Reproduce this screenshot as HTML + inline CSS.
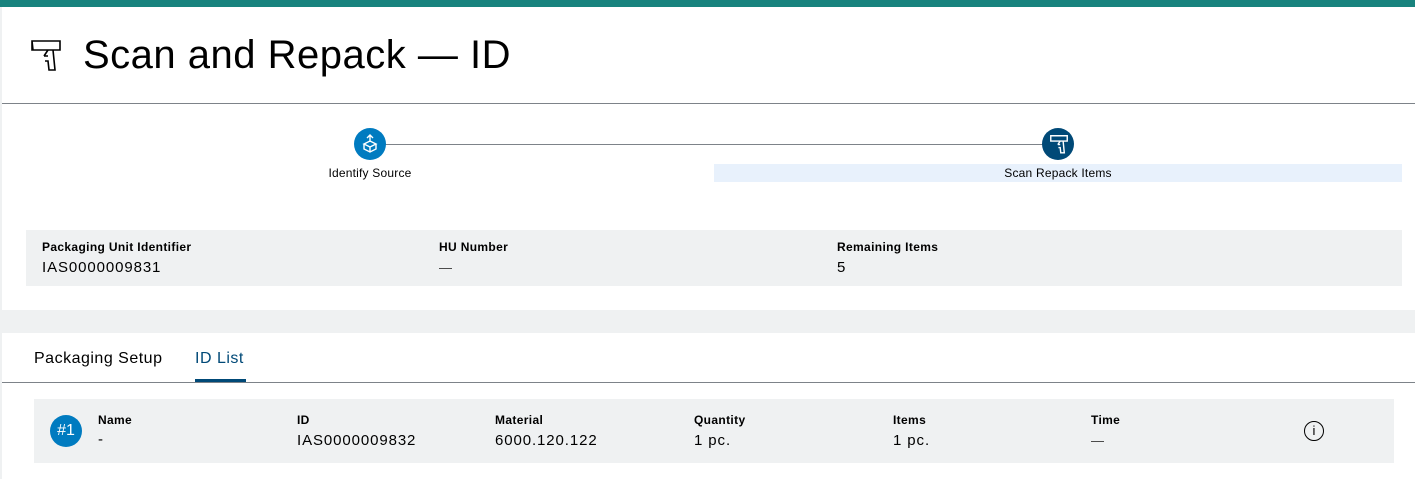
<!DOCTYPE html>
<html><head><meta charset="utf-8"><style>
*{margin:0;padding:0;box-sizing:border-box}
body{width:1415px;height:479px;background:#eff1f2;font-family:"Liberation Sans",sans-serif;color:#000;position:relative;overflow:hidden}
.abs{position:absolute}
.top{left:0;top:0;width:1415px;height:7px;background:#18837e}
.s1{left:2px;top:7px;width:1413px;height:303px;background:#fff}
.s2{left:2px;top:333px;width:1413px;height:146px;background:#fff}
.lbl{font-size:12px;font-weight:bold;letter-spacing:0.35px}
.val{font-size:15px;letter-spacing:0.9px}
.dash{font-size:13px;color:#333}
</style></head><body>
<div class="abs top"></div>
<div class="abs s1"></div>
<div class="abs s2"></div>
<svg class="abs" style="left:29px;top:38px" width="34" height="34" viewBox="0 0 34 34" fill="none" stroke="#000" stroke-width="1.6"><path d="M3 3h28v9H3z M3 3l1 9 M19 12l-4 6 M15 18h4 M19 12h5l2 20h-6l-1-9h-3"/></svg>
<div class="abs" style="left:83px;top:30px;font-size:40px;line-height:50px;letter-spacing:0.5px">Scan and Repack — ID</div>
<div class="abs" style="left:2px;top:103px;width:1413px;height:1px;background:#7d8389"></div>
<div class="abs" style="left:370px;top:144px;width:688px;height:1px;background:#7d8389"></div>
<div class="abs" style="left:714px;top:164px;width:688px;height:18px;background:#e8f1fc"></div>
<div class="abs" style="left:354px;top:128px;width:32px;height:32px;border-radius:50%;background:#007bc0"></div>
<svg class="abs" style="left:360px;top:134px" width="20" height="20" viewBox="0 0 20 20" fill="none" stroke="#fff" stroke-width="1.4"><path d="M10 1v7 M7 4l3-3 3 3 M4 10l6-3 6 3-6 3z M4 10v5l6 3 6-3v-5 M10 13v5"/></svg>
<div class="abs" style="left:1042px;top:128px;width:32px;height:32px;border-radius:50%;background:#004977"></div>
<svg class="abs" style="left:1049px;top:134px" width="20" height="20" viewBox="0 0 34 34" fill="none" stroke="#fff" stroke-width="2.4"><path d="M3 3h28v9H3z M19 12l-4 6 M15 18h4 M19 12h5l2 20h-6l-1-9h-3"/></svg>
<div class="abs" style="left:270px;top:166px;width:200px;text-align:center;font-size:12px;letter-spacing:0.2px">Identify Source</div>
<div class="abs" style="left:958px;top:166px;width:200px;text-align:center;font-size:12px;letter-spacing:0.2px">Scan Repack Items</div>
<div class="abs" style="left:26px;top:230px;width:1376px;height:56px;background:#eff1f2"></div>
<div class="abs lbl" style="left:42px;top:240px">Packaging Unit Identifier</div>
<div class="abs val" style="left:42px;top:259px">IAS0000009831</div>
<div class="abs lbl" style="left:439px;top:240px">HU Number</div>
<div class="abs val dash" style="left:439px;top:260px">—</div>
<div class="abs lbl" style="left:837px;top:240px">Remaining Items</div>
<div class="abs val" style="left:837px;top:259px">5</div>
<div class="abs" style="left:34px;top:350px;font-size:16px;letter-spacing:0.5px">Packaging Setup</div>
<div class="abs" style="left:195px;top:350px;font-size:16px;letter-spacing:0.5px;color:#004977">ID List</div>
<div class="abs" style="left:195px;top:379px;width:51px;height:3px;background:#004977"></div>
<div class="abs" style="left:2px;top:382px;width:1413px;height:1px;background:#7d8389"></div>
<div class="abs" style="left:34px;top:399px;width:1360px;height:64px;background:#eff1f2"></div>
<div class="abs" style="left:50px;top:415px;width:32px;height:32px;border-radius:50%;background:#007bc0;color:#fff;font-size:16px;line-height:32px;text-align:center">#1</div>
<div class="abs lbl" style="left:98px;top:413px">Name</div><div class="abs val" style="left:98px;top:431px">-</div>
<div class="abs lbl" style="left:297px;top:413px">ID</div><div class="abs val" style="left:297px;top:432px">IAS0000009832</div>
<div class="abs lbl" style="left:495px;top:413px">Material</div><div class="abs val" style="left:495px;top:432px">6000.120.122</div>
<div class="abs lbl" style="left:694px;top:413px">Quantity</div><div class="abs val" style="left:694px;top:432px">1 pc.</div>
<div class="abs lbl" style="left:893px;top:413px">Items</div><div class="abs val" style="left:893px;top:432px">1 pc.</div>
<div class="abs lbl" style="left:1091px;top:413px">Time</div><div class="abs val dash" style="left:1091px;top:433px">—</div>
<div class="abs" style="left:1304px;top:421px;width:20px;height:20px;border:1.5px solid #000;border-radius:50%;font-size:13px;line-height:17px;text-align:center;color:#000">i</div>
</body></html>
